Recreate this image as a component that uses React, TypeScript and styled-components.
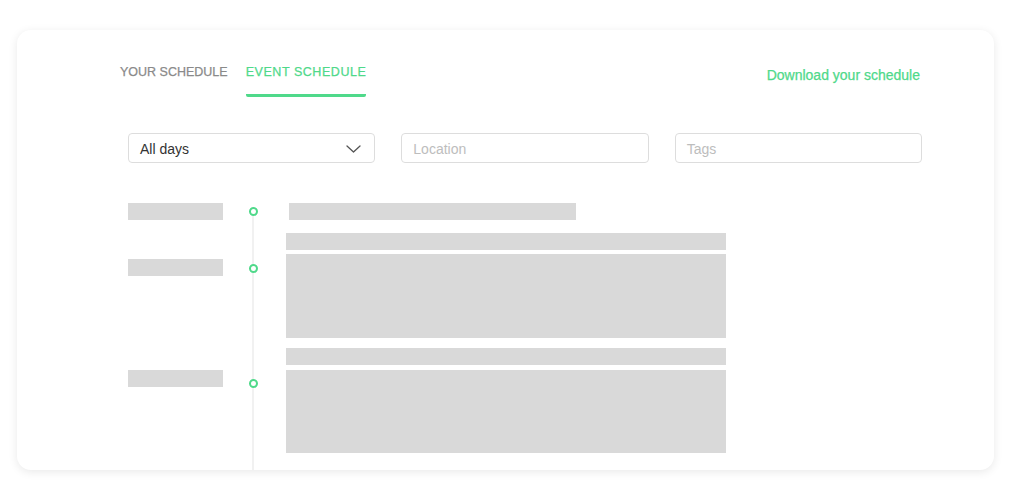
import React from "react";
import styled, { createGlobalStyle } from "styled-components";

const GREEN = "#4fd98a";
const BAR = "#d9d9d9";

const Global = createGlobalStyle`
  html, body { margin: 0; padding: 0; background: #ffffff; }
  body { font-family: "Liberation Sans", Arial, Helvetica, sans-serif; }
  * { box-sizing: border-box; }
`;

const Page = styled.div`
  padding: 30px 0 0 17px;
  width: 1024px;
  height: 498px;
`;

const Card = styled.div`
  width: 977px;
  height: 440px;
  background: #ffffff;
  border-radius: 14px;
  box-shadow: 0 2px 10px rgba(0, 0, 0, 0.09);
  padding-top: 34px;
  display: flex;
  flex-direction: column;
  overflow: hidden;
`;

const Header = styled.div`
  display: flex;
  justify-content: space-between;
  align-items: flex-start;
  margin: 0 74px 0 103px;
`;

const Tabs = styled.div`
  display: flex;
  gap: 18px;
`;

const Tab = styled.div<{ $active?: boolean }>`
  font-size: 12.5px;
  line-height: 16px;
  font-weight: 400;
  -webkit-text-stroke: 0.25px currentColor;
  letter-spacing: ${(p) => (p.$active ? "0.55px" : "0")};
  text-transform: uppercase;
  color: ${(p) => (p.$active ? GREEN : "#8a8a8a")};
  padding-bottom: 14px;
  border-bottom: 3px solid ${(p) => (p.$active ? GREEN : "transparent")};
  border-radius: 0 0 2px 2px;
`;

const DownloadLink = styled.a`
  font-size: 14px;
  line-height: 16px;
  color: ${GREEN};
  -webkit-text-stroke: 0.25px currentColor;
  text-decoration: none;
  margin-top: 3px;
`;

const Filters = styled.div`
  margin: 36px 72px 0 111px;
  display: grid;
  grid-template-columns: repeat(3, 1fr);
  gap: 26px;
`;

const Field = styled.div<{ $placeholder?: boolean }>`
  height: 30px;
  border: 1.5px solid #dddddd;
  border-radius: 4px;
  padding: 1px 13px 0 11px;
  display: flex;
  align-items: center;
  justify-content: space-between;
  font-size: 14px;
  color: ${(p) => (p.$placeholder ? "#bdbdbd" : "#333333")};
`;

const Timeline = styled.div`
  flex: 1;
  margin: 40px 0 0 111px;
  background-image: linear-gradient(#f1f1f1, #f1f1f1);
  background-repeat: no-repeat;
  background-size: 2px calc(100% - 8px);
  background-position: 124px 8px;
`;

const Row = styled.div<{ $top: number }>`
  display: grid;
  grid-template-columns: 95px 63px 440px;
  align-items: start;
  margin-top: ${(p) => p.$top}px;
`;

const TimeBar = styled.div<{ $offset: number }>`
  height: 17px;
  background: ${BAR};
  margin-top: ${(p) => p.$offset}px;
`;

const Dot = styled.div<{ $offset: number }>`
  width: 9px;
  height: 9px;
  border-radius: 50%;
  border: 2.5px solid ${GREEN};
  background: #ffffff;
  margin: ${(p) => p.$offset}px 0 0 25.5px;
`;

const Content = styled.div<{ $gap: number }>`
  display: flex;
  flex-direction: column;
  gap: ${(p) => p.$gap}px;
`;

const Block = styled.div<{ $h: number; $w?: number; $indent?: number }>`
  height: ${(p) => p.$h}px;
  width: ${(p) => (p.$w ? `${p.$w}px` : "100%")};
  margin-left: ${(p) => p.$indent ?? 0}px;
  background: ${BAR};
`;

const Chevron = () => (
  <svg width="15" height="8" viewBox="0 0 15 8" fill="none">
    <path d="M1 1L7.5 7L14 1" stroke="#555555" strokeWidth="1.3" strokeLinecap="round" strokeLinejoin="round" />
  </svg>
);

export default function App() {
  return (
    <Page>
      <Global />
      <Card>
        <Header>
          <Tabs>
            <Tab>Your schedule</Tab>
            <Tab $active>Event schedule</Tab>
          </Tabs>
          <DownloadLink href="#">Download your schedule</DownloadLink>
        </Header>
        <Filters>
          <Field>
            All days
            <Chevron />
          </Field>
          <Field $placeholder>Location</Field>
          <Field $placeholder>Tags</Field>
        </Filters>
        <Timeline>
          <Row $top={0}>
            <TimeBar $offset={0} />
            <Dot $offset={4} />
            <Content $gap={0}>
              <Block $h={17} $w={287} $indent={3} />
            </Content>
          </Row>
          <Row $top={13}>
            <TimeBar $offset={26} />
            <Dot $offset={30.5} />
            <Content $gap={4}>
              <Block $h={17} />
              <Block $h={84} />
            </Content>
          </Row>
          <Row $top={10}>
            <TimeBar $offset={22} />
            <Dot $offset={30.5} />
            <Content $gap={5}>
              <Block $h={17} />
              <Block $h={83} />
            </Content>
          </Row>
        </Timeline>
      </Card>
    </Page>
  );
}
